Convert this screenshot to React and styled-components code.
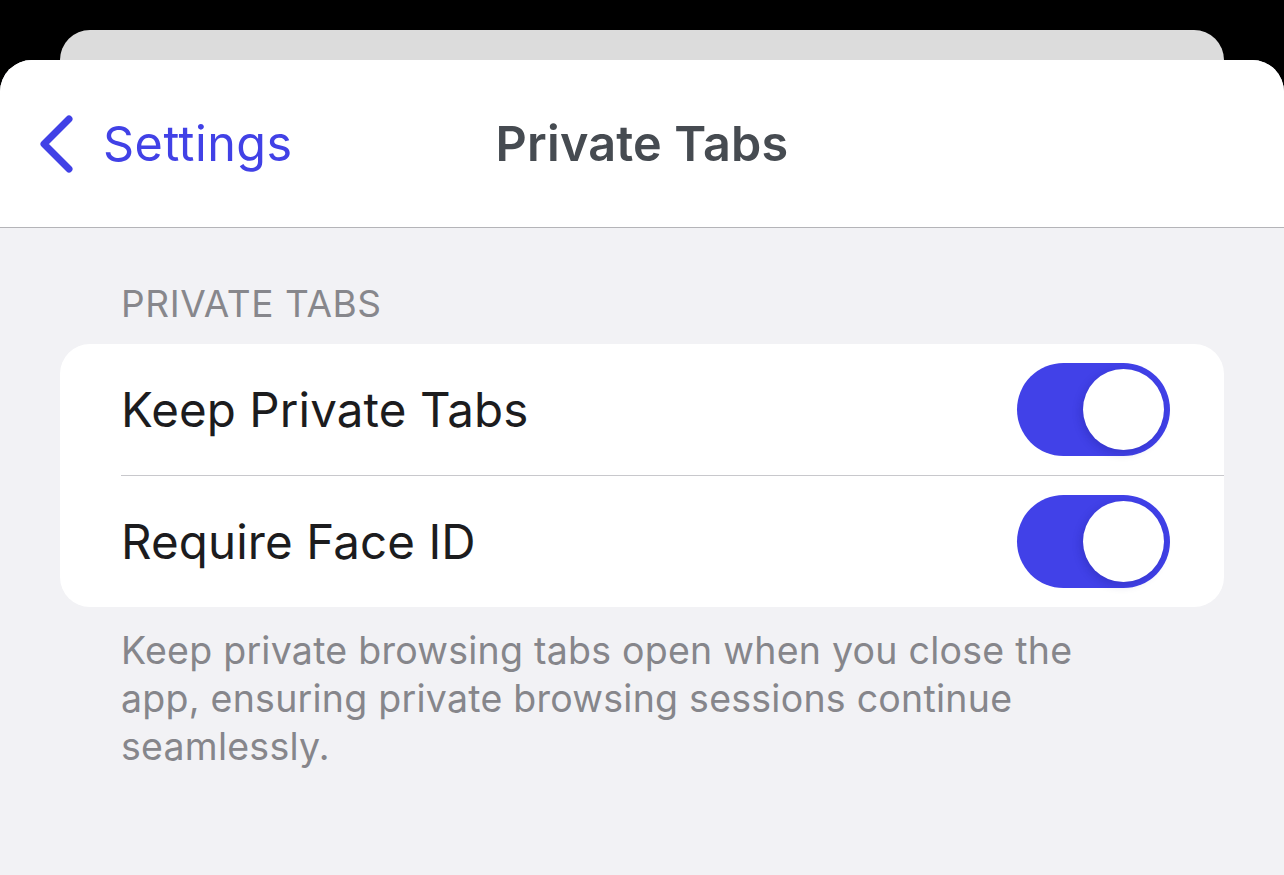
import React, { useState } from "react";
import styled, { createGlobalStyle } from "styled-components";

const GlobalStyle = createGlobalStyle`
  html, body {
    margin: 0;
    padding: 0;
    background: #000;
  }
  body {
    font-family: Inter, "Noto Sans", "Liberation Sans", sans-serif;
    -webkit-font-smoothing: antialiased;
  }
`;

const Screen = styled.div`
  width: 1284px;
  height: 875px;
  overflow: hidden;
  background: #000;
  padding-top: 30px;
  box-sizing: border-box;
  display: flex;
  flex-direction: column;
`;

const BackCard = styled.div`
  height: 30px;
  margin: 0 60px;
  background: #dcdcdc;
  border-radius: 30px 30px 0 0;
  flex-shrink: 0;
`;

const Sheet = styled.div`
  flex: 1;
  background: #f2f2f5;
  border-radius: 32px 32px 0 0;
  overflow: hidden;
  display: flex;
  flex-direction: column;
`;

const NavBar = styled.div`
  height: 168px;
  flex-shrink: 0;
  background: #fff;
  border-bottom: 1px solid #b4b4b8;
  box-sizing: border-box;
  display: grid;
  grid-template-columns: 1fr auto 1fr;
  align-items: center;
  padding: 0 0 0 38px;
`;

const BackButton = styled.button`
  display: flex;
  align-items: center;
  gap: 29px;
  border: 0;
  background: none;
  padding: 0;
  color: #4141e6;
  font: inherit;
  font-size: 48.5px;
  letter-spacing: 0.5px;
  cursor: pointer;
  justify-self: start;
`;

const Title = styled.h1`
  margin: 0 0 0 -38px;
  font-size: 48.5px;
  font-weight: 600;
  color: #464b51;
  letter-spacing: 0.2px;
`;

const Content = styled.div`
  padding: 0 60px;
  display: flex;
  flex-direction: column;
`;

const SectionHeader = styled.div`
  margin: 54px 0 0 61px;
  font-size: 37px;
  color: #87878c;
  letter-spacing: 0.6px;
  line-height: 44px;
  height: 62px;
`;

const Group = styled.div`
  background: #fff;
  border-radius: 30px;
  overflow: hidden;
  padding-bottom: 1px;
`;

const Row = styled.div`
  height: 131px;
  margin-left: 61px;
  padding-right: 54px;
  display: flex;
  align-items: center;
  justify-content: space-between;
  border-top: ${(p) => (p.$first ? "none" : "1px solid #c8c8cc")};
  box-sizing: border-box;
`;

const Label = styled.span`
  font-size: 47.5px;
  color: #1c1c1e;
  letter-spacing: 0.1px;
`;

const Toggle = styled.button`
  width: 153px;
  height: 93px;
  border-radius: 47px;
  border: 0;
  padding: 0;
  background: ${(p) => (p.$on ? "#4141e8" : "#e5e5ea")};
  position: relative;
  cursor: pointer;
  flex-shrink: 0;
`;

const Knob = styled.span`
  position: absolute;
  top: 6px;
  left: ${(p) => (p.$on ? "66px" : "6px")};
  width: 81px;
  height: 81px;
  border-radius: 50%;
  background: #fff;
  box-shadow: -2px 3px 8px rgba(20, 20, 120, 0.25);
`;

const Footer = styled.p`
  margin: 20px 0 0 61px;
  font-size: 37.5px;
  line-height: 48px;
  color: #86868b;
  max-width: 990px;
  letter-spacing: 0.25px;
`;

function Switch({ on, onChange }) {
  return (
    <Toggle $on={on} onClick={() => onChange(!on)} aria-pressed={on}>
      <Knob $on={on} />
    </Toggle>
  );
}

export default function App() {
  const [keepTabs, setKeepTabs] = useState(true);
  const [faceId, setFaceId] = useState(true);

  return (
    <>
      <GlobalStyle />
      <Screen>
        <BackCard />
        <Sheet>
          <NavBar>
            <BackButton>
              <svg width="36" height="60" viewBox="0 0 36 60" fill="none">
                <path
                  d="M31 5 L6 30 L31 55"
                  stroke="currentColor"
                  strokeWidth="7"
                  strokeLinecap="round"
                  strokeLinejoin="round"
                />
              </svg>
              Settings
            </BackButton>
            <Title>Private Tabs</Title>
            <div />
          </NavBar>
          <Content>
            <SectionHeader>PRIVATE TABS</SectionHeader>
            <Group>
              <Row $first>
                <Label>Keep Private Tabs</Label>
                <Switch on={keepTabs} onChange={setKeepTabs} />
              </Row>
              <Row>
                <Label>Require Face ID</Label>
                <Switch on={faceId} onChange={setFaceId} />
              </Row>
            </Group>
            <Footer>
              Keep private browsing tabs open when you close the app, ensuring
              private browsing sessions continue seamlessly.
            </Footer>
          </Content>
        </Sheet>
      </Screen>
    </>
  );
}
